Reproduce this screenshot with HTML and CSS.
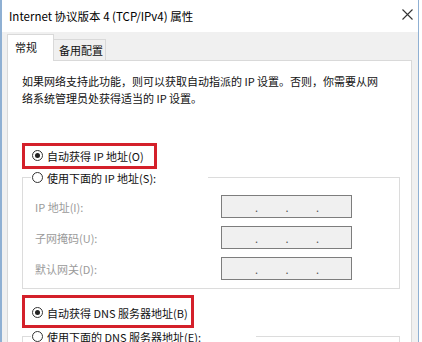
FILE: index.html
```html
<!DOCTYPE html>
<html lang="zh-CN">
<head>
    <meta charset="UTF-8">
    <title>Internet 协议版本 4 (TCP/IPv4) 属性</title>
    <link rel="stylesheet" href="styles.css">
</head>
<body>

    <div class="window">
        <!-- 标题栏 -->
        <div class="titlebar">
            <span class="title">Internet 协议版本 4 (TCP/IPv4) 属性</span>
            <svg class="close" width="11" height="11" viewBox="0 0 11 11">
                <path d="M0.5 0.5 L10.5 10.5 M10.5 0.5 L0.5 10.5" stroke="#333" stroke-width="1.1" fill="none"/>
            </svg>
        </div>

        <div class="client">
            <!-- 选项卡 -->
            <div class="tabs">
                <div class="tab active">常规</div>
                <div class="tab">备用配置</div>
            </div>

            <div class="panel">
                <p class="intro">如果网络支持此功能，则可以获取自动指派的 IP 设置。否则，你需要从网<br>络系统管理员处获得适当的 IP 设置。</p>

                <div class="mark mark-ip">
                    <label class="radio"><span class="dot checked"></span>自动获得 IP 地址(O)</label>
                </div>

                <fieldset class="group">
                    <legend class="legend-ip"><label class="radio"><span class="dot"></span>使用下面的 IP 地址(S):</label></legend>
                    <div class="fields">
                        <span class="label">IP 地址(I):</span>
                        <span class="ipbox"><i>.</i><i>.</i><i>.</i></span>
                        <span class="label">子网掩码(U):</span>
                        <span class="ipbox"><i>.</i><i>.</i><i>.</i></span>
                        <span class="label">默认网关(D):</span>
                        <span class="ipbox"><i>.</i><i>.</i><i>.</i></span>
                    </div>
                </fieldset>

                <div class="mark mark-dns">
                    <label class="radio"><span class="dot checked"></span>自动获得 DNS 服务器地址(B)</label>
                </div>

                <fieldset class="group group-dns">
                    <legend class="legend-dns"><label class="radio"><span class="dot"></span>使用下面的 DNS 服务器地址(E):</label></legend>
                </fieldset>
            </div>
        </div>
    </div>

</body>
</html>
```

FILE: styles.css
```css
body {
    margin: 0;
    background-color: #ffffff;
    font-family: "Noto Sans CJK SC", "Noto Sans", sans-serif;
    font-size: 11px;
    color: #111;
    overflow: hidden;
}
.window {
    width: 419px;
    height: 342px;
    box-sizing: border-box;
    border-left: 2px solid #8fb0d3;
    border-right: 1px solid #8fb0d3;
    background-color: #f0f0f0;
    overflow: hidden;
}
.titlebar {
    height: 31px;
    background-color: #ffffff;
    display: flex;
    align-items: center;
    justify-content: space-between;
    padding: 0 5px 1px 7px;
}
.title {
    font-size: 11.5px;
    color: #000;
}
.close {
    display: block;
    margin-top: -2px;
}
.client {
    padding: 0 6px 0 5px;
}

/* 选项卡 */
.tabs {
    display: flex;
    align-items: flex-end;
    height: 28px;
}
.tab {
    box-sizing: border-box;
    height: 21px;
    padding: 0 2px 0 5px;
    line-height: 21px;
    border: 1px solid #d9d9d9;
    border-bottom: none;
    border-left: none;
    background-color: #f0f0f0;
}
.tab.active {
    height: 27px;
    line-height: 24px;
    padding: 0 16px 2px 7px;
    border-left: 1px solid #d9d9d9;
    background-color: #ffffff;
    margin-bottom: -1px;
    position: relative;
}
.panel {
    height: 300px;
    background-color: #ffffff;
    border: 1px solid #d9d9d9;
    padding: 12px 11px 0 14px;
}
.intro {
    margin: 0;
    line-height: 17px;
    white-space: nowrap;
}

/* 单选框 */
.radio {
    display: flex;
    align-items: center;
    height: 17px;
    white-space: nowrap;
}
.dot {
    box-sizing: border-box;
    width: 11px;
    height: 11px;
    border: 1px solid #333;
    border-radius: 50%;
    margin-right: 4px;
    display: flex;
    align-items: center;
    justify-content: center;
}
.dot.checked::after {
    content: "";
    width: 5px;
    height: 5px;
    border-radius: 50%;
    background-color: #222;
}

/* 红色标注框 */
.mark {
    box-sizing: border-box;
    border: 3px solid #d4202a;
    padding-left: 7px;
}
.mark-ip {
    width: 135px;
    margin-top: 36px;
    padding-top: 1px;
    padding-bottom: 2px;
}
.mark-dns {
    width: 172px;
    margin-top: 6px;
    padding-top: 6px;
    padding-bottom: 4px;
}

/* 分组框 */
.group {
    margin: 0;
    padding: 0;
    border: 1px solid #dcdcdc;
}
.group legend {
    box-sizing: border-box;
    margin-left: 8px;
    padding: 0 0 0 1px;
}
.legend-ip {
    width: 177px;
}
.legend-dns {
    width: 225px;
}
.group-dns {
    height: 40px;
}
.fields {
    display: grid;
    grid-template-columns: 186px 131px;
    row-gap: 8px;
    align-items: center;
    padding: 9px 0 8px 12px;
}
.label {
    color: #9a9a9a;
}
.ipbox {
    box-sizing: border-box;
    height: 23px;
    border: 1px solid #7d7d7d;
    background-color: #f0f0f0;
    display: flex;
    justify-content: space-between;
    padding: 0 32px 0 33px;
    line-height: 22px;
}
.ipbox i {
    font-style: normal;
    color: #555;
}
```
